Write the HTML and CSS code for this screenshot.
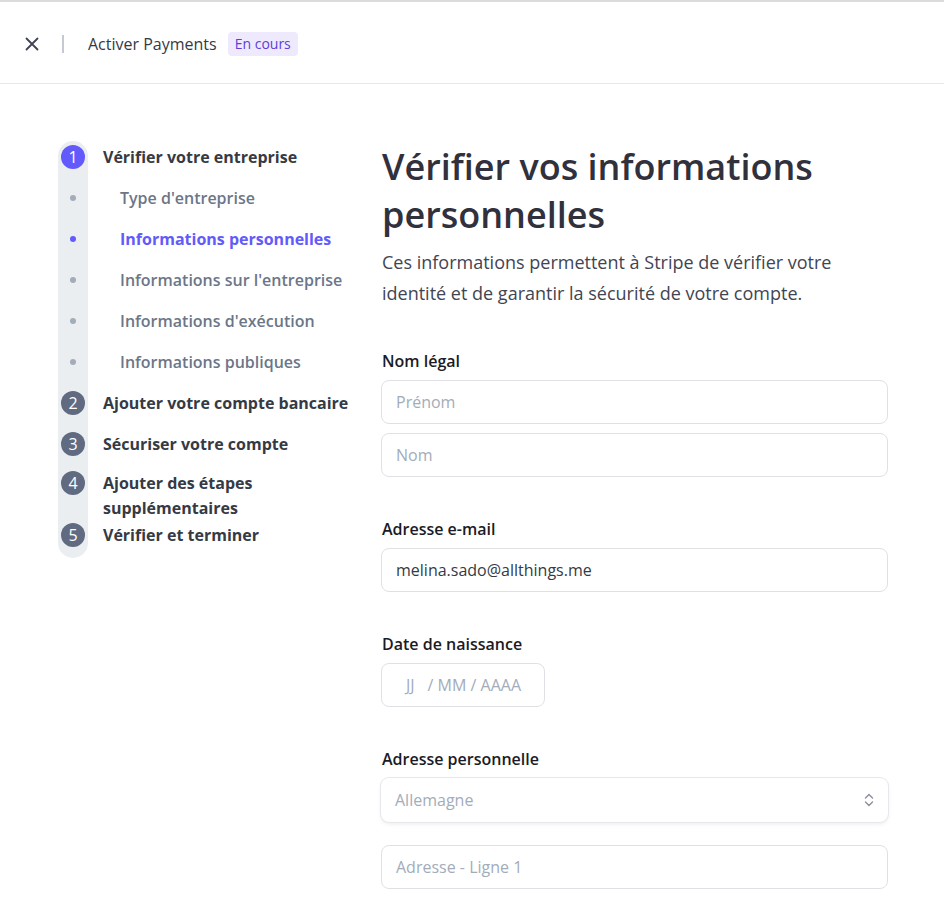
FILE: index.html
```html
<!DOCTYPE html>
<html>
<head>
    <title>Activer Payments</title>
    <link rel="stylesheet" href="styles.css">
</head>
<body>
    <header class="topbar">
        <button class="close-btn" aria-label="Fermer">
            <svg width="14" height="14" viewBox="0 0 14 14"><path d="M1.5 1.5l11 11M12.5 1.5l-11 11" stroke="#404452" stroke-width="1.8" stroke-linecap="round" fill="none"/></svg>
        </button>
        <span class="divider"></span>
        <span class="topbar-title">Activer Payments</span>
        <span class="badge">En cours</span>
    </header>

    <div class="page">
        <nav class="sidebar">
            <ol class="steps">
                <li class="step current"><span class="num">1</span>Vérifier votre entreprise</li>
                <li class="sub"><span class="dot"></span>Type d'entreprise</li>
                <li class="sub active"><span class="dot"></span>Informations personnelles</li>
                <li class="sub"><span class="dot"></span>Informations sur l'entreprise</li>
                <li class="sub"><span class="dot"></span>Informations d'exécution</li>
                <li class="sub"><span class="dot"></span>Informations publiques</li>
                <li class="step"><span class="num">2</span>Ajouter votre compte bancaire</li>
                <li class="step"><span class="num">3</span>Sécuriser votre compte</li>
                <li class="step two-lines"><span class="num">4</span>Ajouter des étapes<br>supplémentaires</li>
                <li class="step last"><span class="num">5</span>Vérifier et terminer</li>
            </ol>
        </nav>

        <main class="main">
            <h1>Vérifier vos informations personnelles</h1>
            <p class="intro">Ces informations permettent à Stripe de vérifier votre identité et de garantir la sécurité de votre compte.</p>

            <section class="field">
                <label>Nom légal</label>
                <input type="text" placeholder="Prénom">
                <input type="text" placeholder="Nom">
            </section>

            <section class="field">
                <label>Adresse e-mail</label>
                <input type="text" value="melina.sado@allthings.me">
            </section>

            <section class="field">
                <label>Date de naissance</label>
                <div class="date-input">
                    <span class="jj">JJ</span>
                    <span>/ MM / AAAA</span>
                </div>
            </section>

            <section class="field">
                <label>Adresse personnelle</label>
                <div class="select">
                    <span>Allemagne</span>
                    <svg width="10" height="16" viewBox="0 0 10 16"><path d="M1.5 6l3.5-3.5L8.5 6M1.5 10l3.5 3.5L8.5 10" stroke="#8a8f9c" stroke-width="1.4" fill="none" stroke-linecap="round" stroke-linejoin="round"/></svg>
                </div>
                <input type="text" class="spaced" placeholder="Adresse - Ligne 1">
            </section>
        </main>
    </div>
</body>
</html>
```

FILE: styles.css
```css
body {
    margin: 0;
    font-family: "Open Sans", "Noto Sans", sans-serif;
    color: #30313d;
    background: #fff;
    border-top: 2px solid #dcdcdc;
}
.topbar {
    display: flex;
    align-items: center;
    height: 79px;
    padding: 2px 0 0 24px;
    border-bottom: 1px solid #e6e7eb;
}
.close-btn {
    display: flex;
    align-items: center;
    justify-content: center;
    width: 16px;
    height: 16px;
    padding: 0;
    border: none;
    background: none;
}
.divider {
    width: 2px;
    height: 18px;
    background: #c4c9d2;
    margin: 0 24px 0 22px;
}
.topbar-title {
    font-size: 16px;
    color: #353a44;
}
.badge {
    margin-left: 11px;
    background: #efe9fe;
    color: #5b3fd6;
    font-size: 14px;
    padding: 2px 7px 3px;
    border-radius: 4px;
}
.page {
    display: flex;
    padding-left: 58px;
}
.sidebar {
    width: 323px;
    padding-top: 52px;
}
.steps {
    position: relative;
    list-style: none;
    margin: 0;
    padding: 0;
}
.steps::before {
    content: "";
    position: absolute;
    left: 0;
    top: 5px;
    bottom: -2px;
    width: 30px;
    background: #ebeef1;
    border-radius: 15px;
}
.steps li {
    position: relative;
    display: flex;
    align-items: flex-start;
    font-size: 16px;
    line-height: 24px;
    padding-top: 8.5px;
    padding-bottom: 8.5px;
}
.step {
    font-weight: 700;
    color: #353a44;
    padding-left: 45px;
}
.num {
    position: absolute;
    left: 3px;
    width: 24px;
    height: 24px;
    border-radius: 50%;
    background: #606a80;
    color: #fff;
    font-weight: 400;
    font-size: 16px;
    line-height: 24px;
    text-align: center;
}
.step.current .num {
    background: #625afa;
}
.sub {
    font-weight: 600;
    color: #6c7688;
    padding-left: 62px;
}
.sub.active {
    color: #625afa;
    font-weight: 700;
}
.dot {
    position: absolute;
    left: 12px;
    top: 18px;
    width: 6px;
    height: 6px;
    border-radius: 50%;
    background: #a3acba;
}
.sub.active .dot {
    background: #625afa;
}
.steps .two-lines {
    line-height: 25px;
    padding-top: 6.5px;
    padding-bottom: 2px;
}
.two-lines .num {
    top: 6.5px;
}
.steps .last {
    padding-top: 0.5px;
}
.main {
    width: 507px;
    padding-top: 59px;
}
h1 {
    margin: 0 0 0 1px;
    font-size: 36px;
    line-height: 48px;
    font-weight: 600;
    color: #30313d;
}
.intro {
    margin: 8px 0 0 1px;
    font-size: 18px;
    line-height: 31px;
    color: #414552;
}
.field {
    display: flex;
    flex-direction: column;
    gap: 9px;
    margin-top: 40px;
}
.field label {
    font-size: 16px;
    line-height: 24px;
    font-weight: 600;
    color: #1a1b25;
    margin: 0 0 -2px 1px;
}
.field input {
    box-sizing: border-box;
    width: 507px;
    height: 44px;
    margin: 0;
    padding: 0 14px;
    border: 1px solid #dfe1e5;
    border-radius: 8px;
    font-family: inherit;
    font-size: 16px;
    color: #353a44;
}
.field input::placeholder {
    color: #a3acb9;
}
.date-input {
    box-sizing: border-box;
    display: flex;
    align-items: center;
    width: 164px;
    height: 44px;
    padding-left: 24px;
    border: 1px solid #dfe1e5;
    border-radius: 8px;
    font-size: 16px;
    color: #a3acb9;
}
.jj {
    margin-right: 13px;
}
.select {
    box-sizing: border-box;
    display: flex;
    align-items: center;
    justify-content: space-between;
    height: 44px;
    padding: 0 14px;
    border-radius: 8px;
    box-shadow: 0 0 0 1px #e6e8ec, 0 2px 4px rgba(0, 0, 0, 0.08);
    font-size: 16px;
    color: #a3acb9;
}
.field input.spaced {
    margin-top: 14px;
}
```
